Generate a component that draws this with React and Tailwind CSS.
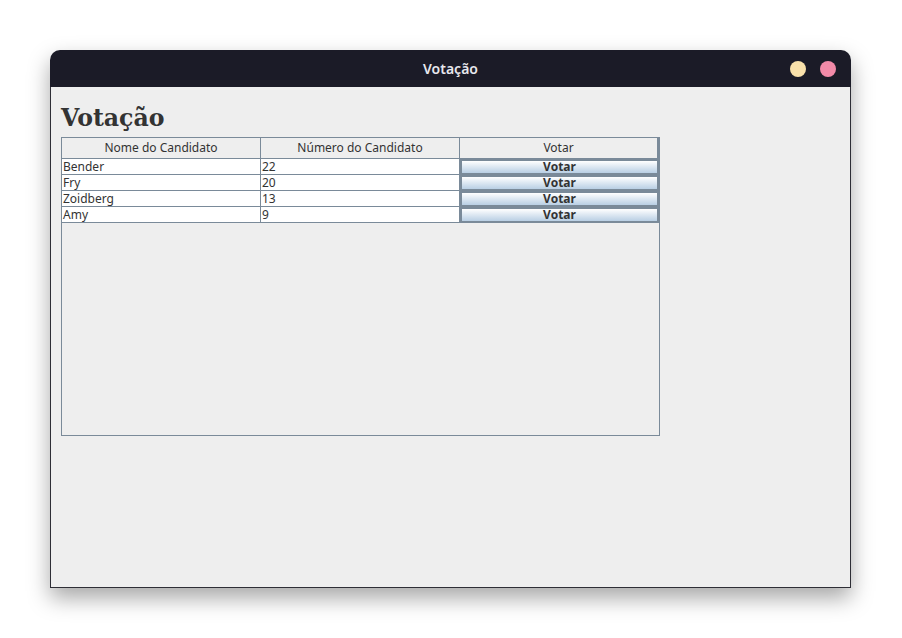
export default function App() {
  const rows = [
    ["Bender", "22"],
    ["Fry", "20"],
    ["Zoidberg", "13"],
    ["Amy", "9"],
  ];
  return (
    <div className="w-[902px] h-[638px] bg-white pl-[50px] pt-[50px]" style={{ fontFamily: "'Noto Sans', sans-serif" }}>
      <div className="w-[801px] h-[538px] flex flex-col rounded-t-[10px] shadow-[0_10px_22px_rgba(0,0,0,0.35)]">
        <div className="h-[37px] bg-[#1b1b27] rounded-t-[10px] relative flex items-center justify-center shrink-0">
          <span className="text-[14px] font-semibold text-[#e8e8ee]">Votação</span>
          <div className="absolute right-[15px] top-[11px] flex gap-[14px]">
            <div className="w-[16px] h-[16px] rounded-full bg-[#f9e1ab]" />
            <div className="w-[16px] h-[16px] rounded-full bg-[#f28aa8]" />
          </div>
        </div>
        <div className="flex-1 bg-[#eeeeee] border-x border-b border-[#2e2e36] pl-[10px] pt-[16px]">
          <div className="text-[23.6px] leading-[30px] font-bold text-[#333333]" style={{ fontFamily: "'DejaVu Serif', serif" }}>
            Votação
          </div>
          <div className="mt-[4px] w-[599px] h-[299px] border border-[#7a8a99] bg-[#eeeeee] text-[12px] text-[#333333]">
            <div className="flex h-[21px] border-b border-[#7a8a99]">
              <div className="w-[199px] border-r border-[#7a8a99] flex items-center justify-center bg-[#eeeeee]">Nome do Candidato</div>
              <div className="w-[199px] border-r border-[#7a8a99] flex items-center justify-center bg-[#eeeeee]">Número do Candidato</div>
              <div className="w-[199px] border-r-2 border-[#7a8a99] flex items-center justify-center bg-[#eeeeee]">Votar</div>
            </div>
            {rows.map(([n, v]) => (
              <div key={n} className="flex h-[16px] bg-white border-b border-[#7a8a99]">
                <div className="w-[199px] border-r border-[#7a8a99] flex items-center pl-[1px] pt-[1px] leading-none">{n}</div>
                <div className="w-[199px] border-r border-[#7a8a99] flex items-center pl-[1px] pt-[1px] leading-none">{v}</div>
                <div className="w-[199px] border-2 border-[#7a8a99] -mb-[1px] flex items-center justify-center font-bold leading-none bg-gradient-to-b from-white to-[#b9cfe4]">
                  Votar
                </div>
              </div>
            ))}
          </div>
        </div>
      </div>
    </div>
  );
}
